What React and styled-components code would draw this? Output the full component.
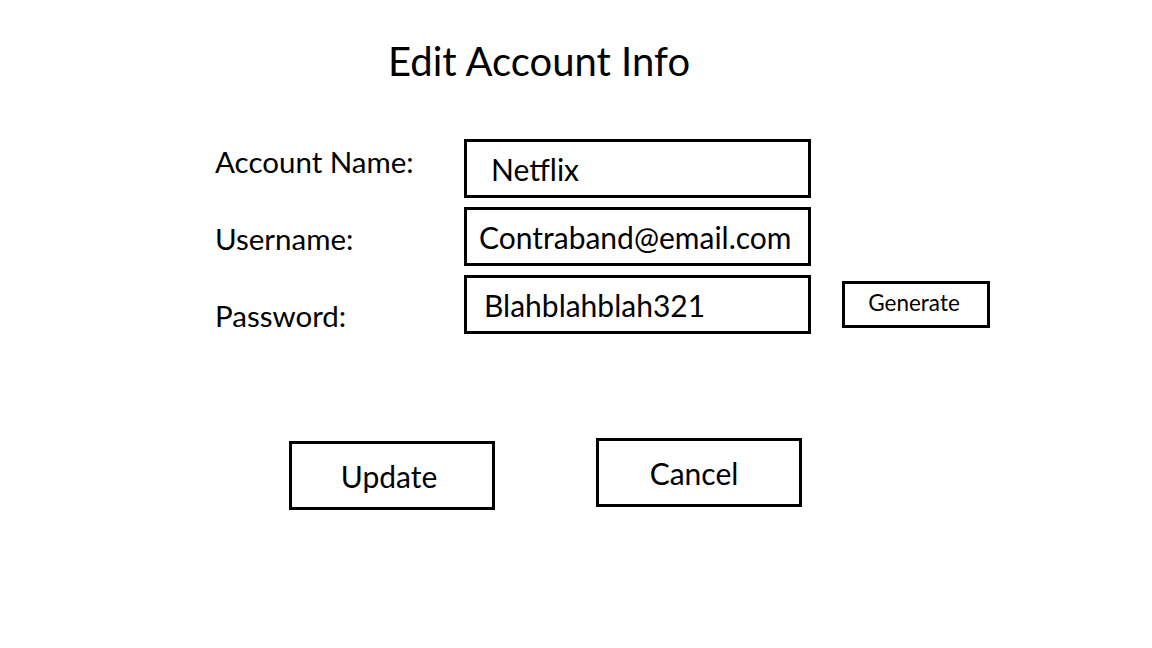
import styled, { createGlobalStyle } from "styled-components";

const GlobalStyle = createGlobalStyle`
  body {
    margin: 0;
    background: #fff;
    color: #000;
    font-family: Lato, "Open Sans", sans-serif;
  }
`;

const Page = styled.div`
  width: 1152px;
  height: 648px;
  box-sizing: border-box;
  padding: 37px 0 0 215px;
  display: flex;
  flex-direction: column;
`;

const Title = styled.h1`
  margin: 0 0 0 173px;
  font-size: 40px;
  font-weight: 400;
  line-height: 48px;
`;

const Form = styled.div`
  margin-top: 54px;
  display: grid;
  grid-template-columns: 249px 347px auto;
  row-gap: 9px;
`;

const Label = styled.div`
  padding-top: ${(p) => p.$shift}px;
  font-size: 29.5px;
  line-height: normal;
`;

const Field = styled.div`
  box-sizing: border-box;
  height: 59px;
  border: 3px solid #000;
  display: flex;
  align-items: center;
  padding-left: ${(p) => p.$indent}px;
  font-size: 30px;
  white-space: nowrap;
  overflow: hidden;
`;

const SmallButton = styled.div`
  box-sizing: border-box;
  align-self: center;
  margin-left: 31px;
  width: 148px;
  height: 47px;
  border: 3px solid #000;
  display: flex;
  align-items: center;
  justify-content: center;
  padding: 0 4px 5px 0;
  font-size: 22.5px;
`;

const Actions = styled.div`
  margin-top: 104px;
  padding-left: 74px;
  display: flex;
  align-items: flex-start;
  gap: 101px;
`;

const Button = styled.div`
  box-sizing: border-box;
  margin-top: ${(p) => p.$drop || 0}px;
  width: 206px;
  height: 69px;
  border: 3px solid #000;
  display: flex;
  align-items: center;
  justify-content: center;
  padding-right: ${(p) => p.$nudge || 0}px;
  font-size: 30px;
`;

const rows = [
  { label: "Account Name:", value: "Netflix", shift: 5, indent: 24 },
  { label: "Username:", value: "Contraband@email.com", shift: 14, indent: 12 },
  { label: "Password:", value: "Blahblahblah321", shift: 23, indent: 17, generate: true },
];

export default function App() {
  return (
    <>
      <GlobalStyle />
      <Page>
        <Title>Edit Account Info</Title>
        <Form>
          {rows.map((r) => (
            <>
              <Label key={r.label} $shift={r.shift}>
                {r.label}
              </Label>
              <Field $indent={r.indent}>{r.value}</Field>
              {r.generate ? <SmallButton>Generate</SmallButton> : <div />}
            </>
          ))}
        </Form>
        <Actions>
          <Button $drop={3} $nudge={6}>Update</Button>
          <Button $nudge={10}>Cancel</Button>
        </Actions>
      </Page>
    </>
  );
}
